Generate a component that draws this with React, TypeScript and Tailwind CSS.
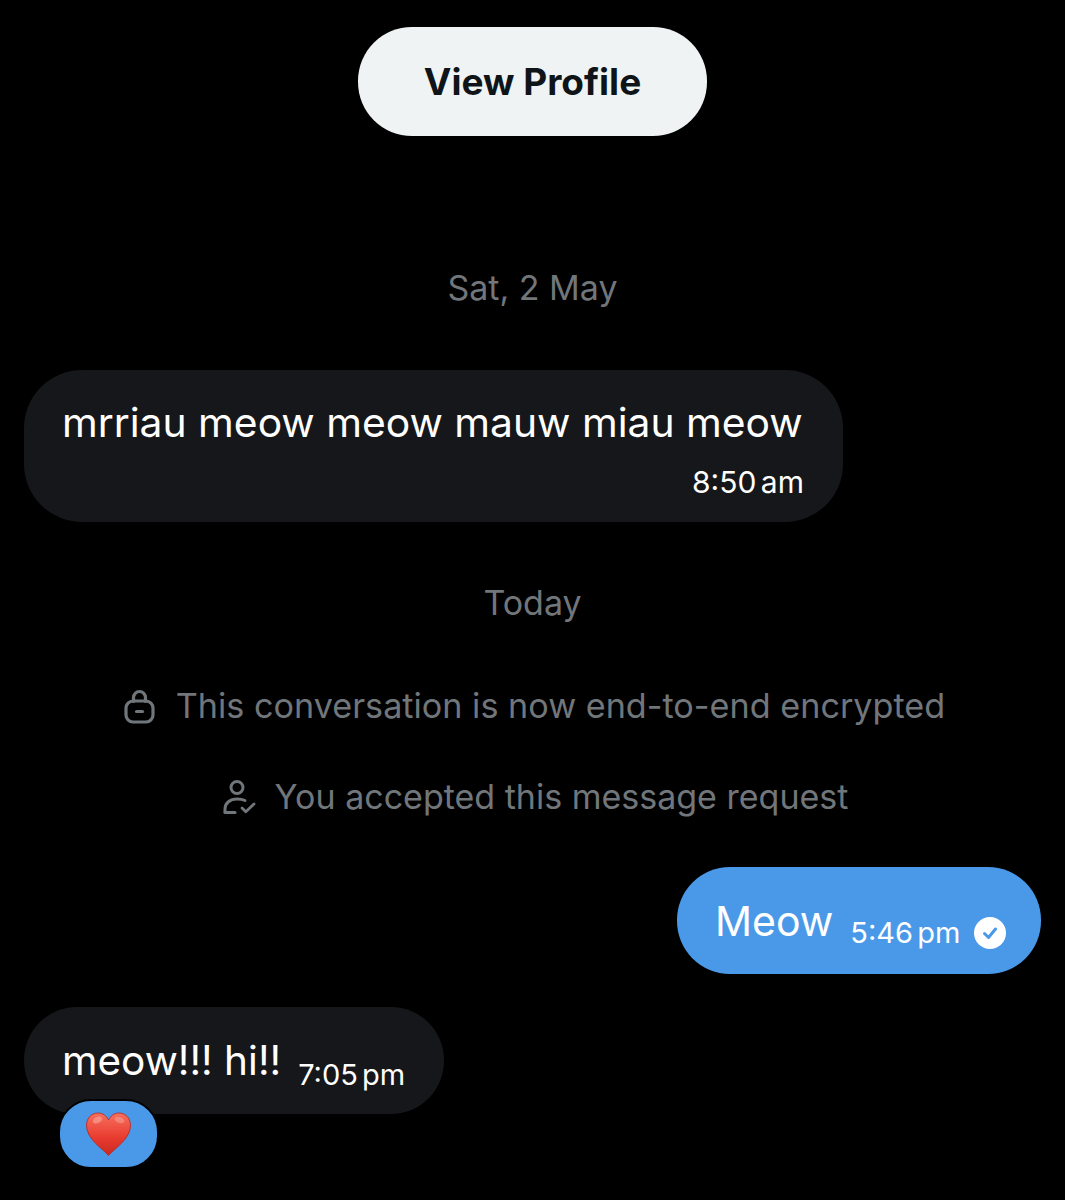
const fontInter = { fontFamily: '"Inter", "Liberation Sans", sans-serif' };

const LockIcon = () => (
  <svg width="32" height="36" viewBox="0 0 32 36" fill="none" stroke="#71767b" strokeWidth="3.2" strokeLinecap="round">
    <path d="M9.500 13.500V9.500a6 6 0 0 1 12 0v4" />
    <rect x="2" y="13" width="27" height="21" rx="7" />
    <path d="M12.500 23.500h6" />
  </svg>
);

const PersonCheckIcon = () => (
  <svg width="34" height="36" viewBox="0 0 34 36" fill="none" stroke="#71767b" strokeWidth="3" strokeLinecap="round" strokeLinejoin="round">
    <circle cx="14" cy="8.500" r="6" />
    <path d="M2 33v-3c0-6 5-10 12-10 3 0 6 .5 8 1.500" />
    <path d="M2 33.500h10" />
    <path d="M19 29l3.800 3.800L31 25" strokeWidth="2.800" />
  </svg>
);

const SentCheck = () => (
  <svg width="32" height="32" viewBox="0 0 32 32">
    <circle cx="16" cy="16" r="16" fill="#ffffff" />
    <path d="M10.500 16.500l4 4L21.500 12" fill="none" stroke="#4a99e9" strokeWidth="3" strokeLinecap="round" strokeLinejoin="round" />
  </svg>
);

const Heart = () => (
  <svg width="47" height="44" viewBox="0 0 46 44">
    <defs>
      <linearGradient id="heartFill" x1="0" y1="0" x2="0" y2="1">
        <stop offset="0" stopColor="#f6705e" />
        <stop offset="0.6" stopColor="#e83a2e" />
        <stop offset="1" stopColor="#c92a20" />
      </linearGradient>
    </defs>
    <path
      d="M23 43.500C17 36.500 1 27 1 13.500 1 5.500 6.500 1 12.500 1c4.800 0 8.500 2.800 10.500 7 2-4.200 5.700-7 10.500-7C39.500 1 45 5.500 45 13.500 45 27 29 36.500 23 43.500z"
      fill="url(#heartFill)"
      stroke="#b9241c"
      strokeWidth="0.8"
    />
    <ellipse cx="12" cy="8" rx="5" ry="3" fill="#fbb0a4" opacity="0.55" transform="rotate(-25 12 8)" />
    <ellipse cx="34" cy="8" rx="5" ry="3" fill="#fbb0a4" opacity="0.45" transform="rotate(20 34 8)" />
  </svg>
);

const Notice = ({ icon, text, className }: { icon: React.ReactNode; text: string; className: string }) => (
  <div className={`flex items-center justify-center leading-[44px] text-[#71767b] ${className}`}>
    {icon}
    <span>{text}</span>
  </div>
);

const Time = ({ label, className }: { label: string; className?: string }) => (
  <span className={`text-[29px] leading-[36px] [word-spacing:-4px] ${className ?? ""}`}>{label}</span>
);

export default function App() {
  return (
    <div className="w-[1065px] h-[1200px] overflow-hidden bg-black flex flex-col" style={fontInter}>
      <div className="flex justify-center pt-[27px]">
        <div className="w-[349px] h-[109px] rounded-[54px] bg-[#eff3f4] flex items-center justify-center text-[37px] font-bold text-[#0f1419]">
          View Profile
        </div>
      </div>

      <div className="mt-[130px] text-center text-[34px] leading-[44px] text-[#71767b]">Sat, 2 May</div>

      <div className="mt-[60px] ml-6 w-[819px] h-[152px] rounded-[58px] bg-[#16171a] pt-[28px] pl-[38px] pr-[39px] text-white">
        <div className="text-[40.8px] leading-[48px] whitespace-nowrap">mrriau meow meow mauw miau meow</div>
        <div className="mt-[18px] text-right leading-[36px]">
          <span className="text-[30px] leading-[36px] [word-spacing:-4px]">8:50 am</span>
        </div>
      </div>

      <div className="mt-[59px] text-center text-[34px] leading-[44px] text-[#71767b]">Today</div>

      <Notice className="mt-[59px] gap-[20px] pl-1 text-[34.2px]" icon={<LockIcon />} text="This conversation is now end-to-end encrypted" />
      <Notice className="mt-[47px] gap-[18px] pl-[6px] text-[34px]" icon={<PersonCheckIcon />} text="You accepted this message request" />

      <div className="mt-[48px] mr-6 self-end w-[364px] h-[107px] rounded-[53px] bg-[#4a99e9] flex items-center pl-[38px] text-white">
        <span className="text-[41px] leading-[48px]">Meow</span>
        <Time label="5:46 pm" className="ml-[17px] translate-y-[12px]" />
        <span className="ml-[14px] translate-y-[12px]">
          <SentCheck />
        </span>
      </div>

      <div className="relative mt-[33px] ml-6 w-[420px] h-[107px] rounded-[53px] bg-[#16171a] flex items-center pl-[38px] text-white">
        <span className="text-[40.5px] leading-[48px]">meow!!! hi!!</span>
        <Time label="7:05 pm" className="ml-[17px] translate-y-[14px]" />
        <div className="absolute left-[34px] top-[92px] w-[97px] h-[66px] rounded-[33px] bg-[#4a99e9] border-2 border-black box-content flex items-center justify-center">
          <Heart />
        </div>
      </div>
    </div>
  );
}
